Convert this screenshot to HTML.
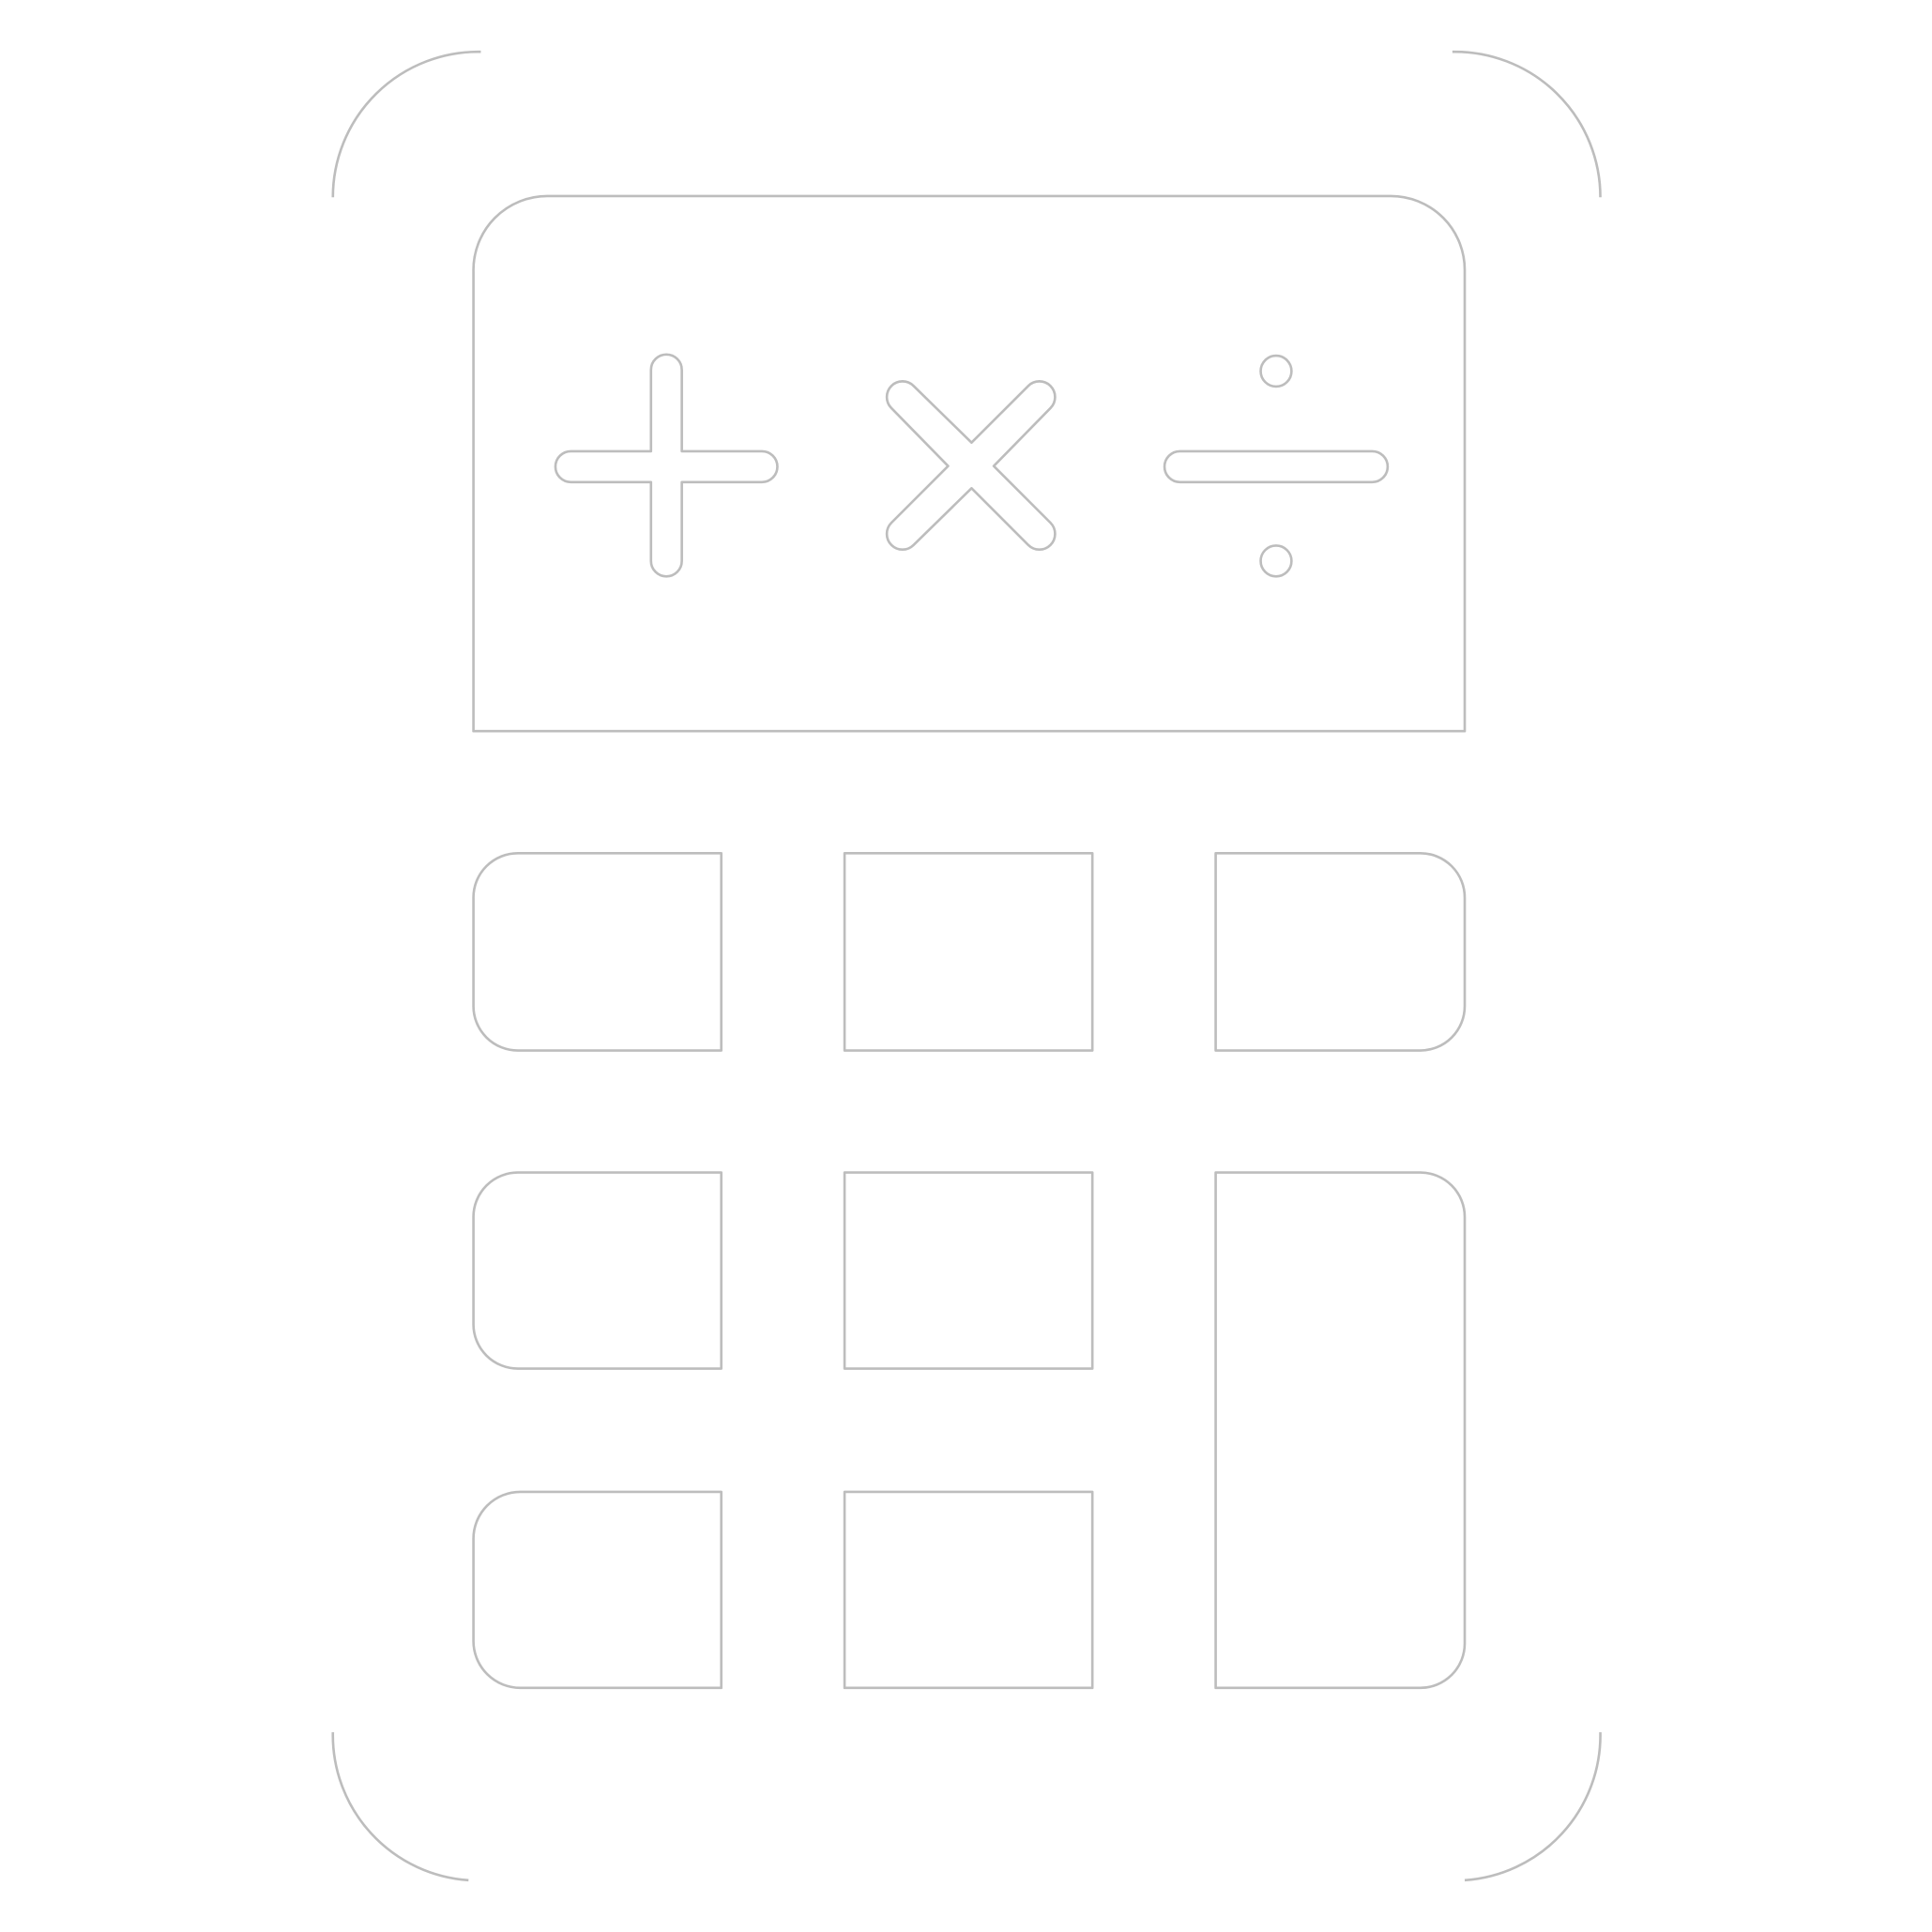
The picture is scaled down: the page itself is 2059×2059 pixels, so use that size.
<!DOCTYPE html>
<html><head><style>html,body{margin:0;padding:0;background:#fff}svg{display:block}</style></head>
<body>
<svg width="2059" height="2059" viewBox="0 0 1567 1567" xmlns="http://www.w3.org/2000/svg">
<g fill="none" stroke="#bdbdbd" stroke-width="2" stroke-linejoin="round">
<path d="M270,160 A118,118 0 0 1 390,42"/>
<path d="M1178,42 A118,118 0 0 1 1298,160"/>
<path d="M270,1405 A118,118 0 0 0 380,1525"/>
<path d="M1188,1525 A118,118 0 0 0 1298,1405"/>
<path d="M384,593 V220 A60,60 0 0 1 444,159 H1128 A60,60 0 0 1 1188,220 V593 Z"/>
<path d="M420,692 H585 V852 H420 A36,36 0 0 1 384,816 V728 A36,36 0 0 1 420,692 Z"/>
<rect x="685" y="692" width="201" height="160"/>
<path d="M986,692 H1152 A36,36 0 0 1 1188,728 V816 A36,36 0 0 1 1152,852 H986 Z"/>
<path d="M420,951 H585 V1110 H420 A36,36 0 0 1 384,1074 V987 A36,36 0 0 1 420,951 Z"/>
<rect x="685" y="951" width="201" height="159"/>
<path d="M986,951 H1152 A36,36 0 0 1 1188,987 V1333 A36,36 0 0 1 1152,1369 H986 Z"/>
<path d="M422,1210 H585 V1369 H422 A38,38 0 0 1 384,1331 V1248 A38,38 0 0 1 422,1210 Z"/>
<rect x="685" y="1210" width="201" height="159"/>
<path d="M528,300 A12.5,12.5 0 0 1 553,300 V366 H618 A12.5,12.5 0 0 1 618,391 H553 V455 A12.5,12.5 0 0 1 528,455 V391 H463 A12.5,12.5 0 0 1 463,366 H528 Z"/>
<path d="M788,359 L834,313 A12.5,12.5 0 0 1 852,331 L806,378 L852,424 A12.5,12.5 0 0 1 834,442 L788,396 L741,442 A12.5,12.5 0 0 1 723,424 L769,378 L723,331 A12.5,12.5 0 0 1 741,313 Z"/>
<path d="M957,366 H1113 A12.5,12.5 0 0 1 1113,391 H957 A12.5,12.5 0 0 1 957,366 Z"/>
<circle cx="1035" cy="301" r="12.5"/>
<circle cx="1035" cy="455" r="12.5"/>
</g>
</svg>
</body></html>
